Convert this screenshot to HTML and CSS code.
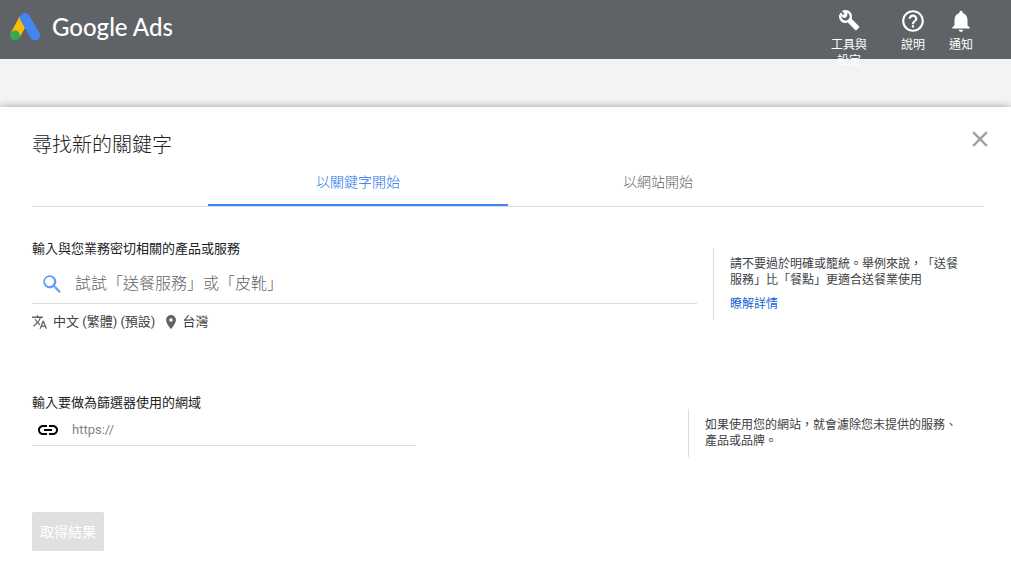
FILE: index.html
```html
<!DOCTYPE html>
<html lang="zh-Hant">
<head>
<meta charset="utf-8">
<meta name="viewport" content="width=device-width, initial-scale=1">
<title>Google Ads</title>
<link rel="stylesheet" href="styles.css">
</head>
<body>
<header class="topbar">
  <a class="brand" href="#">
    <svg class="brand-mark" viewBox="0 0 30 28" aria-hidden="true">
      <path d="M5 22.500 L14 6" stroke="#fbbc04" stroke-width="10" fill="none"/>
      <path d="M15 5 L25 22.500" stroke="#4285f4" stroke-width="10" stroke-linecap="round" fill="none"/>
      <circle cx="5" cy="22.500" r="5" fill="#34a853"/>
    </svg>
    <span class="brand-name">Google Ads</span>
  </a>
  <nav class="tools">
    <button class="tool tool-settings" type="button">
      <svg class="tool-icon" viewBox="0 0 22 22" aria-hidden="true"><path d="M7.500 1A6.500 6.500 0 0 1 13.600 9.800L21 17.200Q21.700 18 21 18.700L18.700 21Q18 21.700 17.200 21L9.800 13.600A6.500 6.500 0 0 1 1.400 5.300L3.400 7.200A4.200 4.200 0 0 0 8.200 11.600A4.200 4.200 0 0 0 11.600 6.500A4.200 4.200 0 0 0 8.800 3.500L9.500 4.600L9 7.500L7 9L4.800 8.500L1.700 5.200L2.600 3.500L5.200 6L6.500 4.700L3.800 2.100Q5.500 1 7.500 1z"/></svg>
      <span>工具與<br>設定</span>
    </button>
    <button class="tool" type="button">
      <svg class="tool-icon tool-icon-large" viewBox="0 0 24 24" aria-hidden="true"><path d="M11 18h2v-2h-2v2zm1-16C6.480 2 2 6.480 2 12s4.480 10 10 10 10-4.480 10-10S17.520 2 12 2zm0 18c-4.410 0-8-3.590-8-8s3.590-8 8-8 8 3.590 8 8-3.590 8-8 8zm0-14c-2.210 0-4 1.790-4 4h2c0-1.100.9-2 2-2s2 .9 2 2c0 2-3 1.750-3 5h2c0-2.250 3-2.500 3-5 0-2.210-1.790-4-4-4z"/></svg>
      <span>說明</span>
    </button>
    <button class="tool" type="button">
      <svg class="tool-icon tool-icon-large" viewBox="0 0 24 24" aria-hidden="true"><path d="M12 22c1.100 0 2-.9 2-2h-4c0 1.100.89 2 2 2zm6-6v-5c0-3.070-1.640-5.640-4.500-6.320V4c0-.83-.67-1.500-1.500-1.500s-1.500.67-1.500 1.500v.68C7.630 5.360 6 7.920 6 11v5l-2 2v1h16v-1l-2-2z"/></svg>
      <span>通知</span>
    </button>
  </nav>
</header>
<main class="panel">
  <div class="panel-head">
    <h1 class="title">尋找新的關鍵字</h1>
    <button class="close" type="button" aria-label="關閉">
      <svg class="close-icon" viewBox="0 0 14 14" aria-hidden="true"><path d="M1 1L13 13M13 1L1 13" stroke="#9aa0a6" stroke-width="2"/></svg>
    </button>
  </div>
  <div class="tabs" role="tablist">
    <button class="tab tab-active" type="button" role="tab" aria-selected="true">以關鍵字開始</button>
    <button class="tab" type="button" role="tab" aria-selected="false">以網站開始</button>
  </div>
  <section class="row">
    <div class="field">
      <label class="label" for="keywords">輸入與您業務密切相關的產品或服務</label>
      <div class="search-box">
        <svg class="search-icon" viewBox="0 0 18 18" aria-hidden="true"><path d="M12.900 11.300h-.8l-.3-.3A6.500 6.500 0 1 0 11 11.800l.3.3v.8l5 5 1.500-1.500zM6.500 11A4.500 4.500 0 1 1 6.500 2a4.500 4.500 0 0 1 0 9z"/></svg>
        <input class="input input-large" id="keywords" type="text" placeholder="試試「送餐服務」或「皮靴」">
      </div>
      <div class="targets">
        <button class="target" type="button">
          <svg class="translate-icon" viewBox="1 2 22 20" aria-hidden="true"><path d="M12.870 15.070l-2.540-2.510.03-.03c1.740-1.940 2.980-4.170 3.710-6.530H17V4h-7V2H8v2H1v1.990h11.170C11.500 7.920 10.440 9.750 9 11.350 8.070 10.320 7.300 9.190 6.690 8h-2c.73 1.630 1.730 3.170 2.980 4.560l-5.090 5.020L4 19l5-5 3.110 3.110.76-2.040zM18.500 10h-2L12 22h2l1.120-3h4.750L21 22h2l-4.500-12zm-2.620 7l1.620-4.330L19.120 17h-3.240z"/></svg>
          <span>中文 (繁體) (預設)</span>
        </button>
        <button class="target" type="button">
          <svg class="pin-icon" viewBox="5 2 14 20" aria-hidden="true"><path d="M12 2C8.130 2 5 5.130 5 9c0 5.250 7 13 7 13s7-7.750 7-13c0-3.870-3.130-7-7-7zm0 9.500a2.500 2.500 0 1 1 0-5 2.500 2.500 0 0 1 0 5z"/></svg>
          <span>台灣</span>
        </button>
      </div>
    </div>
    <aside class="hint hint-keywords">
      <p class="hint-text">請不要過於明確或籠統。舉例來說，「送餐<br>服務」比「餐點」更適合送餐業使用</p>
      <a class="hint-link" href="#">瞭解詳情</a>
    </aside>
  </section>
  <section class="row row-domain">
    <div class="field">
      <label class="label" for="domain">輸入要做為篩選器使用的網域</label>
      <div class="url-box">
        <svg class="link-icon" viewBox="2 7 20 10" aria-hidden="true"><path d="M3.900 12c0-1.710 1.390-3.100 3.100-3.100h4V7H7c-2.760 0-5 2.240-5 5s2.240 5 5 5h4v-1.900H7c-1.710 0-3.100-1.390-3.100-3.100zM8 13h8v-2H8v2zm9-6h-4v1.900h4c1.710 0 3.100 1.390 3.100 3.100s-1.390 3.100-3.100 3.100h-4V17h4c2.760 0 5-2.240 5-5s-2.240-5-5-5z"/></svg>
        <input class="input" id="domain" type="text" placeholder="https://">
      </div>
    </div>
    <aside class="hint hint-domain">
      <p class="hint-text">如果使用您的網站，就會濾除您未提供的服務、<br>產品或品牌。</p>
    </aside>
  </section>
  <button class="submit" type="button" disabled>取得結果</button>
</main>
</body>
</html>
```
FILE: styles.css
```css
* {
  box-sizing: border-box;
}

body {
  margin: 0;
  background: #f1f3f4;
  color: #202124;
  font-family: Roboto, "Noto Sans CJK TC", sans-serif;
  font-size: 13px;
  line-height: 16px;
  text-spacing-trim: space-all;
}

button {
  margin: 0;
  padding: 0;
  border: 0;
  background: none;
  color: inherit;
  font: inherit;
  cursor: pointer;
}

svg {
  display: block;
  flex: none;
  fill: currentColor;
}

.topbar {
  display: flex;
  justify-content: space-between;
  height: 59px;
  padding: 0 26px 0 10px;
  background: #5f6368;
  color: #fff;
}

.brand {
  display: flex;
  align-items: center;
  gap: 12px;
  height: 53px;
  color: #fff;
  text-decoration: none;
}

.brand-mark {
  width: 30px;
  height: 28px;
}

.brand-name {
  font-family: Lato, sans-serif;
  font-size: 24px;
  font-weight: 500;
  line-height: 28px;
}

.tools {
  display: flex;
  align-items: flex-start;
  padding-top: 8px;
}

.tool {
  display: flex;
  flex-direction: column;
  align-items: center;
  width: 48px;
  font-size: 12px;
}

.tool-settings {
  margin-right: 16px;
}

.tool-icon {
  width: 22px;
  height: 22px;
  margin: 1px 0 6px;
}

.tool-icon-large {
  width: 26px;
  height: 26px;
  margin: 0 0 3px;
}

.panel {
  min-height: calc(100vh - 107px);
  margin-top: 48px;
  padding: 24px 27px 15px 32px;
  background: #fff;
  box-shadow: 0 0 8px rgba(0, 0, 0, 0.35);
}

.panel-head {
  display: flex;
  justify-content: space-between;
  align-items: flex-start;
}

.title {
  margin: 0;
  font-size: 20px;
  font-weight: 300;
  line-height: 28px;
}

.close {
  margin-right: -4px;
}

.close-icon {
  width: 16px;
  height: 16px;
}

.tabs {
  display: flex;
  justify-content: center;
  border-bottom: 1px solid #dadce0;
}

.tab {
  width: 300px;
  height: 47px;
  padding-top: 1px;
  border-bottom: 2px solid transparent;
  color: #5f6368;
  font-size: 14px;
  font-weight: 300;
}

.tab-active {
  border-color: #4285f4;
  color: #1a73e8;
}

.row {
  display: flex;
  justify-content: space-between;
  align-items: flex-start;
  gap: 16px;
  padding-top: 34px;
}

.row-domain {
  padding-top: 65px;
}

.field {
  flex: 1;
}

.label {
  display: block;
}

.search-box,
.url-box {
  display: flex;
  align-items: center;
  border-bottom: 1px solid #dadce0;
}

.search-box {
  gap: 14px;
  height: 47px;
  padding: 8px 0 0 11px;
}

.url-box {
  gap: 14px;
  max-width: 384px;
  height: 35px;
  padding: 4px 0 0 6px;
}

.search-icon {
  width: 18px;
  height: 18px;
  color: #669df6;
}

.link-icon {
  width: 20px;
  height: 10px;
  color: #000;
}

.input {
  flex: 1;
  min-width: 0;
  padding: 0;
  border: 0;
  outline: 0;
  background: none;
  color: #202124;
  font: inherit;
}

.input-large {
  font-size: 16px;
  font-weight: 300;
  line-height: 24px;
}

.input::placeholder {
  color: #80868b;
}

.input-large::placeholder {
  color: #5f6368;
}

.targets {
  display: flex;
  gap: 11px;
  padding-top: 10px;
}

.target {
  display: flex;
  align-items: center;
  gap: 6px;
  color: #3c4043;
}

.translate-icon {
  width: 15px;
  height: 14px;
  color: #5f6368;
}

.pin-icon {
  width: 10px;
  height: 14px;
  color: #5f6368;
}

.hint {
  padding: 8px 0 8px 16px;
  border-left: 1px solid #dadce0;
  color: #3c4043;
  font-size: 12px;
}

.hint-keywords {
  width: 271px;
  margin-top: 7px;
}

.hint-domain {
  width: 296px;
  margin-top: 14px;
}

.hint-text {
  margin: 0;
}

.hint-link {
  display: block;
  margin-top: 8px;
  color: #1967d2;
  text-decoration: none;
}

.submit {
  height: 39px;
  margin-top: 55px;
  padding: 0 8px;
  border-radius: 2px;
  background: #e0e0e0;
  color: #fff;
  font-size: 14px;
}
```
